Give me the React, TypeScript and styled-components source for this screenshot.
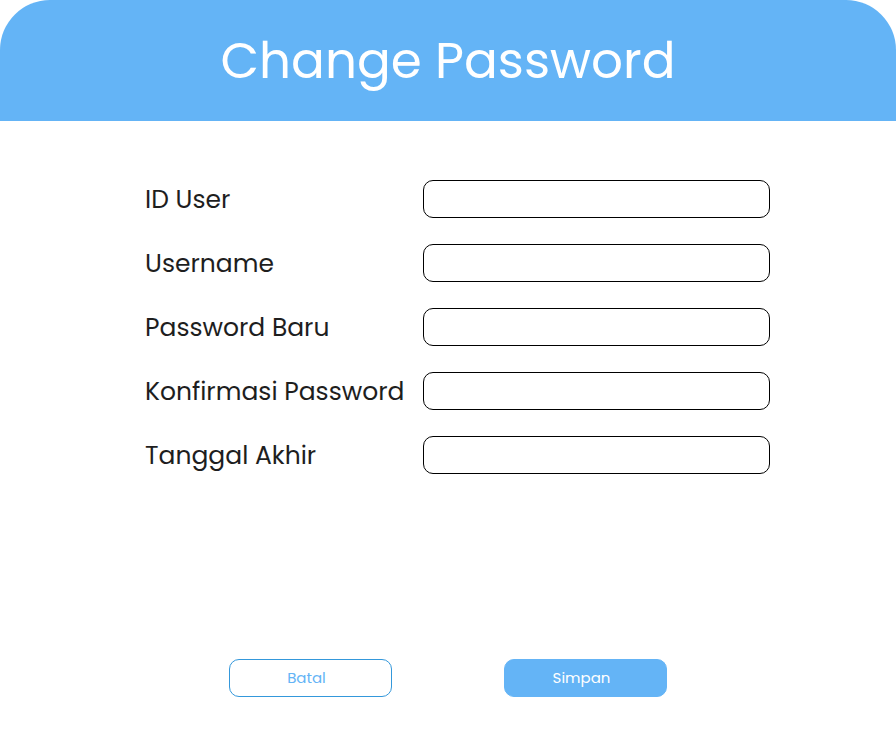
import React, { useState } from "react";
import styled, { createGlobalStyle } from "styled-components";

const GlobalStyle = createGlobalStyle`
  *, *::before, *::after { box-sizing: border-box; }
  body {
    margin: 0;
    background: #ffffff;
    font-family: Poppins, Inter, "Open Sans", sans-serif;
    color: #1e1e1e;
  }
`;

const Page = styled.main`
  display: flex;
  flex-direction: column;
  min-height: 100vh;
`;

const Header = styled.header`
  display: flex;
  align-items: center;
  justify-content: center;
  height: 121px;
  background: #64b4f6;
  border-radius: 50px 50px 0 0;
`;

const Title = styled.h1`
  margin: 0;
  font-size: 50px;
  line-height: 60px;
  font-weight: 400;
  color: #ffffff;
`;

const Form = styled.form`
  display: flex;
  flex: 1;
  flex-direction: column;
  justify-content: space-between;
  padding: 59px 126px 49px 145px;
`;

const Fields = styled.div`
  display: flex;
  flex-direction: column;
  gap: 26px;
`;

const Field = styled.div`
  display: grid;
  grid-template-columns: 260px 1fr;
  column-gap: 18px;
  align-items: center;
`;

const Label = styled.label`
  padding-top: 2px;
  font-size: 25px;
  line-height: 36px;
  white-space: nowrap;
`;

const Input = styled.input`
  width: 100%;
  height: 38px;
  padding: 0 12px;
  border: 1px solid #000000;
  border-radius: 10px;
  background: #ffffff;
  font: inherit;
  font-size: 16px;
`;

const Actions = styled.div`
  display: flex;
  justify-content: center;
  gap: 112px;
  margin-right: -19px;
  margin-left: -38px;
`;

const Button = styled.button<{ $primary?: boolean }>`
  width: 163px;
  height: 38px;
  padding: 0 8px 2px 0;
  border: 1px solid ${(p) => (p.$primary ? "#64b4f6" : "#3498db")};
  border-radius: 10px;
  background: ${(p) => (p.$primary ? "#64b4f6" : "#ffffff")};
  color: ${(p) => (p.$primary ? "#ffffff" : "#64b4f6")};
  font-family: inherit;
  font-size: 15px;
  cursor: pointer;
`;

const fields = [
  { id: "user-id", label: "ID User", type: "text" },
  { id: "username", label: "Username", type: "text" },
  { id: "new-password", label: "Password Baru", type: "password" },
  { id: "confirm-password", label: "Konfirmasi Password", type: "password" },
  { id: "end-date", label: "Tanggal Akhir", type: "text" },
];

export default function App() {
  const [values, setValues] = useState<Record<string, string>>({});

  return (
    <>
      <GlobalStyle />
      <Page>
        <Header>
          <Title>Change Password</Title>
        </Header>
        <Form onSubmit={(e) => e.preventDefault()}>
          <Fields>
            {fields.map(({ id, label, type }) => (
              <Field key={id}>
                <Label htmlFor={id}>{label}</Label>
                <Input
                  id={id}
                  type={type}
                  value={values[id] ?? ""}
                  onChange={(e) => setValues({ ...values, [id]: e.target.value })}
                />
              </Field>
            ))}
          </Fields>
          <Actions>
            <Button type="button" onClick={() => setValues({})}>Batal</Button>
            <Button type="submit" $primary>Simpan</Button>
          </Actions>
        </Form>
      </Page>
    </>
  );
}
